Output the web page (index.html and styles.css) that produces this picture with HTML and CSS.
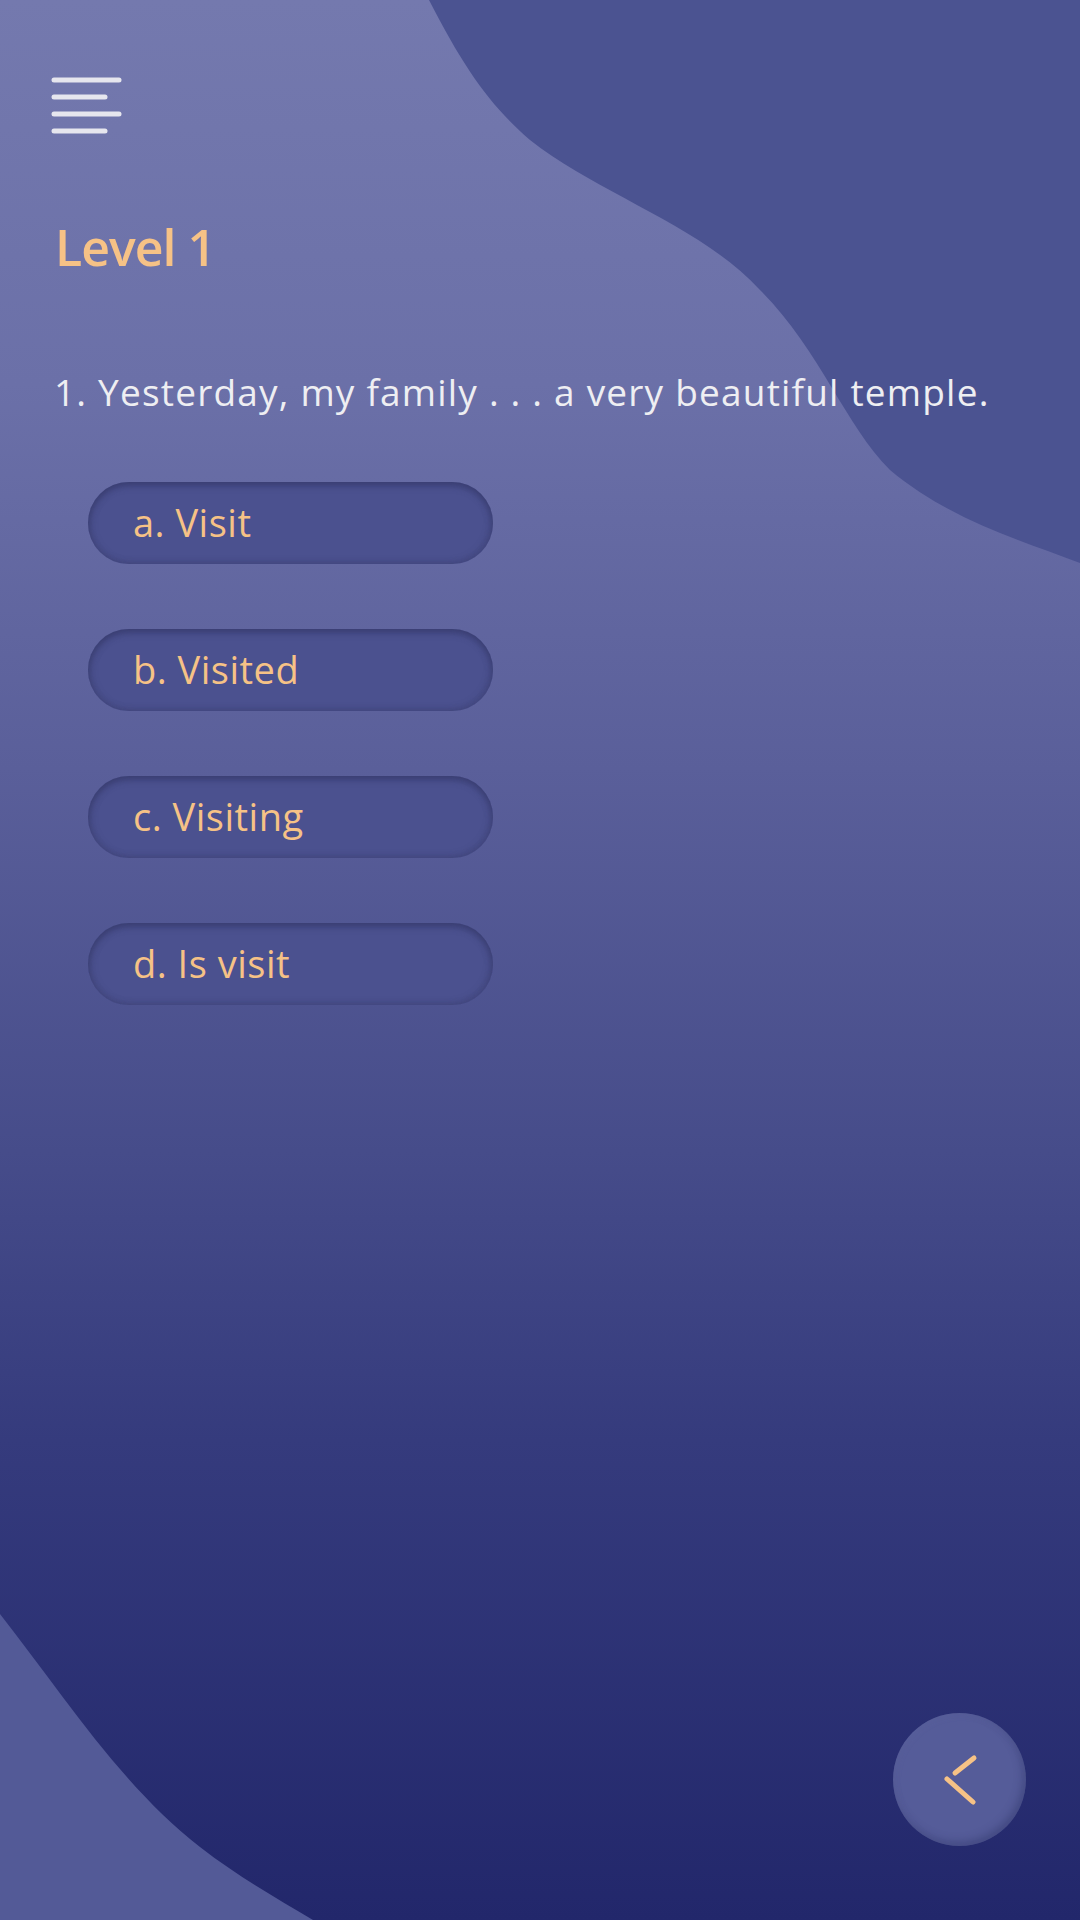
FILE: index.html
```html
<!DOCTYPE html>
<html lang="en">
<head>
<meta charset="utf-8">
<title>Level 1</title>
<link rel="stylesheet" href="styles.css">
</head>
<body>
<div class="screen">
  <svg class="bg" width="1080" height="1920" viewBox="0 0 1080 1920" aria-hidden="true">
    <path class="blob-top" d="M429,0 C465,70 490,105 530,140 C600,195 700,225 760,290 C820,350 845,425 890,470 C950,520 1020,540 1080,563 L1080,0 Z"/>
    <path class="blob-bottom" d="M0,1614 C60,1690 120,1785 200,1847 C240,1878 280,1900 313,1920 L0,1920 Z"/>
  </svg>

  <main class="content">
    <button class="menu" aria-label="Menu">
      <svg width="72" height="62" viewBox="0 0 72 62">
        <g stroke="#E6E6EE" stroke-width="5" stroke-linecap="round">
          <line x1="3" y1="5" x2="68" y2="5"/>
          <line x1="3" y1="22" x2="54" y2="22"/>
          <line x1="3" y1="39" x2="68" y2="39"/>
          <line x1="3" y1="56" x2="54" y2="56"/>
        </g>
      </svg>
    </button>

    <h1 class="level">Level 1</h1>

    <p class="question">1. Yesterday, my family . . . a very beautiful temple.</p>

    <ul class="options">
      <li class="option">a. Visit</li>
      <li class="option">b. Visited</li>
      <li class="option">c. Visiting</li>
      <li class="option">d. Is visit</li>
    </ul>
  </main>

  <button class="back" aria-label="Back">
    <svg width="133" height="133" viewBox="0 0 133 133">
      <g stroke="#F6C286" stroke-width="5" stroke-linecap="round">
        <line x1="81" y1="45" x2="62" y2="60"/>
        <line x1="54" y1="66" x2="80" y2="89"/>
      </g>
    </svg>
  </button>
</div>
</body>
</html>
```

FILE: styles.css
```css
* { box-sizing: border-box; }

html, body {
  margin: 0;
  padding: 0;
}

body {
  width: 1080px;
  height: 1920px;
  overflow: hidden;
  font-family: "Open Sans", "Noto Sans", sans-serif;
}

.screen {
  position: relative;
  width: 1080px;
  height: 1920px;
  overflow: hidden;
  background: linear-gradient(180deg, #7479AE 0%, #6B70A8 20%, #5A5F9A 40%, #464C8A 60%, #353B7D 75%, #22276B 100%);
}

.bg {
  position: absolute;
  left: 0;
  top: 0;
}

.blob-top { fill: #4B5391; }
.blob-bottom { fill: #535A97; }

.content {
  position: relative;
  display: flex;
  flex-direction: column;
  align-items: flex-start;
  padding: 75px 0 0 0;
}

.menu {
  margin: 0 0 0 51px;
  padding: 0;
  border: 0;
  background: none;
  display: block;
  line-height: 0;
}

.level {
  margin: 80px 0 0 55px;
  font-size: 50px;
  font-weight: 600;
  line-height: 60px;
  color: #F6C286;
  letter-spacing: -1px;
}

.question {
  margin: 92px 0 0 54px;
  font-size: 37px;
  line-height: 46px;
  color: #EEEEF2;
  letter-spacing: 1.2px;
}

.options {
  list-style: none;
  margin: 67px 0 0 88px;
  padding: 0;
  display: flex;
  flex-direction: column;
  gap: 65px;
}

.option {
  width: 405px;
  height: 82px;
  border-radius: 41px;
  background: #4B518F;
  box-shadow: inset 0 4px 6px rgba(50, 52, 100, 0.55), inset 3px 0 6px rgba(60, 62, 110, 0.35), inset -3px -2px 6px rgba(60, 62, 110, 0.3);
  padding-left: 45px;
  display: flex;
  align-items: center;
  font-size: 38px;
  color: #F6C286;
  letter-spacing: 0.5px;
  padding-bottom: 2px;
}

.back {
  position: absolute;
  right: 54px;
  bottom: 74px;
  width: 133px;
  height: 133px;
  border-radius: 50%;
  border: 0;
  padding: 0;
  background: #555C99;
  box-shadow: inset -3px -4px 8px rgba(35, 40, 90, 0.35), inset 2px 2px 6px rgba(120, 125, 180, 0.15);
  line-height: 0;
}
```
